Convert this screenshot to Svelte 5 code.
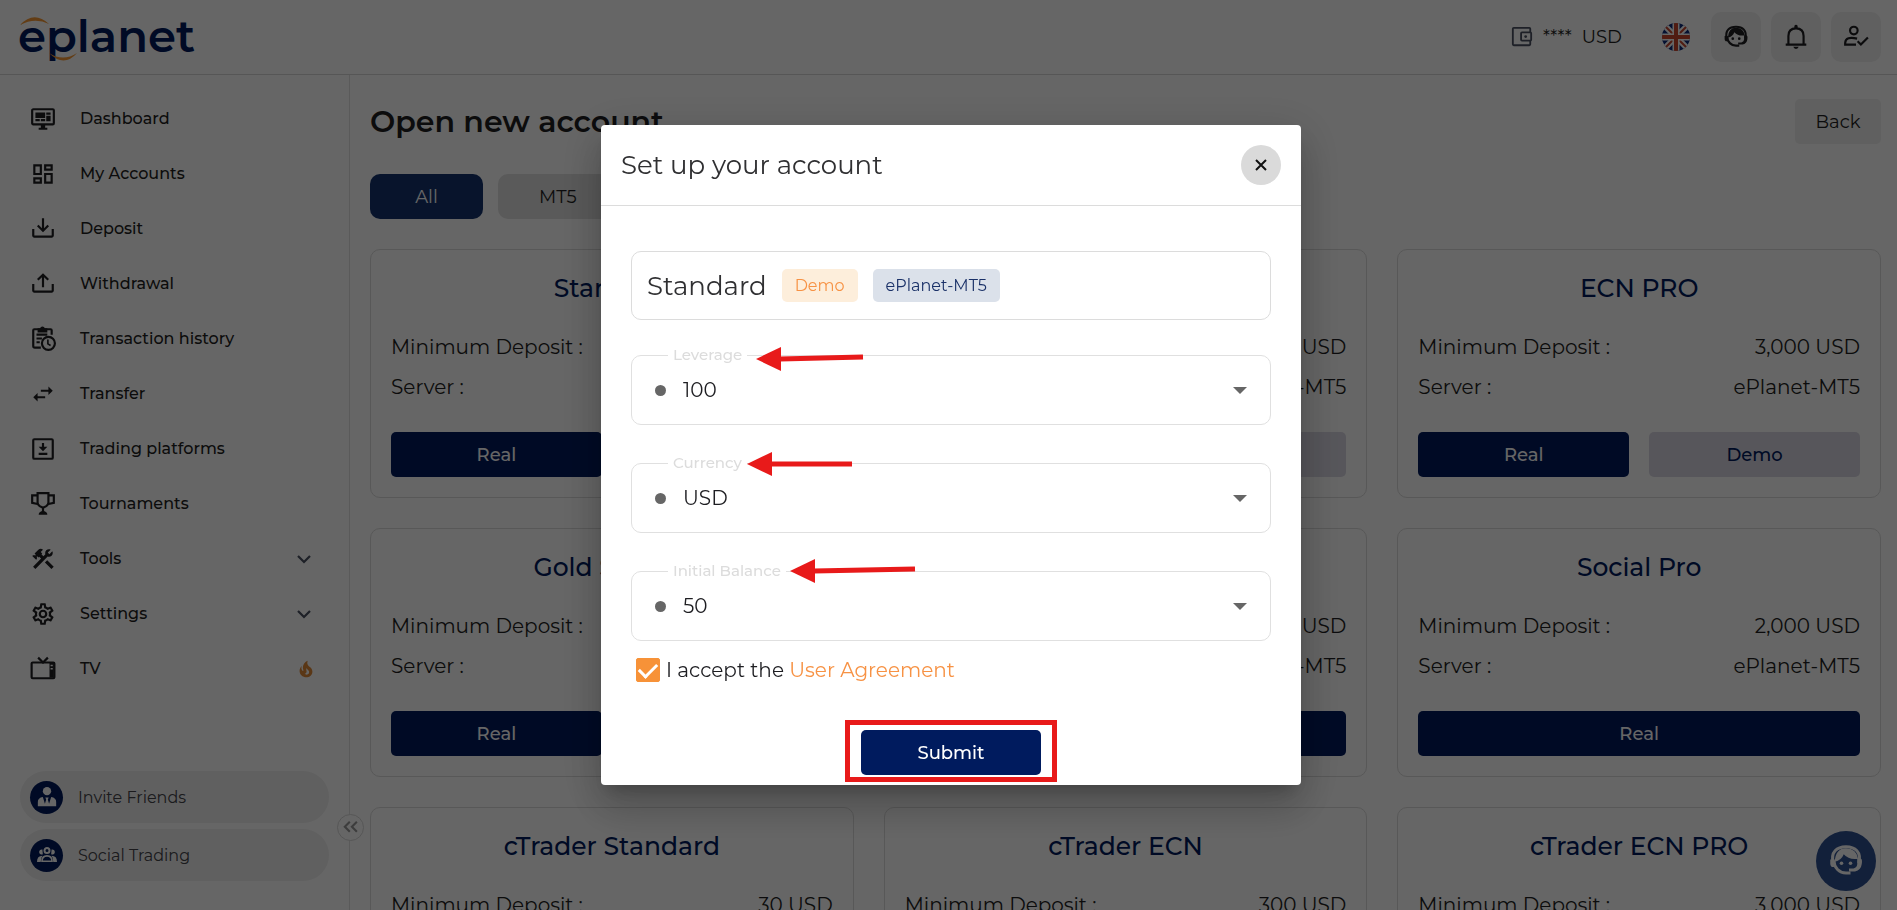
<script lang="ts">
  type NavItem = { label: string; icon: string; expandable?: boolean; hot?: boolean };
  type Account = { name: string; deposit: string; server: string; demo: boolean };

  const navItems: NavItem[] = [
    { label: 'Dashboard', icon: 'monitor' },
    { label: 'My Accounts', icon: 'accounts' },
    { label: 'Deposit', icon: 'deposit' },
    { label: 'Withdrawal', icon: 'withdrawal' },
    { label: 'Transaction history', icon: 'history' },
    { label: 'Transfer', icon: 'transfer' },
    { label: 'Trading platforms', icon: 'platforms' },
    { label: 'Tournaments', icon: 'trophy' },
    { label: 'Tools', icon: 'tools', expandable: true },
    { label: 'Settings', icon: 'settings', expandable: true },
    { label: 'TV', icon: 'tv', hot: true },
  ];

  const accounts: Account[] = [
    { name: 'Standard', deposit: '50 USD', server: 'ePlanet-MT5', demo: true },
    { name: 'ECN', deposit: '500 USD', server: 'ePlanet-MT5', demo: true },
    { name: 'ECN PRO', deposit: '3,000 USD', server: 'ePlanet-MT5', demo: true },
    { name: 'Gold Special', deposit: '50 USD', server: 'ePlanet-MT5', demo: true },
    { name: 'Social', deposit: '200 USD', server: 'ePlanet-MT5', demo: false },
    { name: 'Social Pro', deposit: '2,000 USD', server: 'ePlanet-MT5', demo: false },
    { name: 'cTrader Standard', deposit: '30 USD', server: 'ePlanet-cTrader', demo: true },
    { name: 'cTrader ECN', deposit: '300 USD', server: 'ePlanet-cTrader', demo: true },
    { name: 'cTrader ECN PRO', deposit: '3,000 USD', server: 'ePlanet-cTrader', demo: true },
  ];

  const fields = [
    { id: 'leverage', label: 'Leverage', options: ['100', '200', '500'], arrow: { left: 124, top: -16, length: 107, rise: 2 } },
    { id: 'currency', label: 'Currency', options: ['USD', 'EUR'], arrow: { left: 115, top: -19, length: 105, rise: 0 } },
    { id: 'balance', label: 'Initial Balance', options: ['50', '100', '1000'], arrow: { left: 158, top: -20, length: 125, rise: 2 } },
  ];

  // filled icons on a 24x24 grid
  const paths: Record<string, string> = {
    monitor: 'M21,16V4H3V16H21M21,2A2,2 0 0,1 23,4V16A2,2 0 0,1 21,18H14V20H16V22H8V20H10V18H3C1.89,18 1,17.1 1,16V4C1,2.89 1.89,2 3,2H21M5,6H14V11H5V6M15,6H19V8H15V6M19,9V14H15V9H19M5,12H9V14H5V12M10,12H14V14H10V12Z',
    accounts: 'M19,5V7H15V5H19M9,5V11H5V5H9M19,13V19H15V13H19M9,17V19H5V17H9M21,3H13V9H21V3M11,3H3V13H11V3M21,11H13V21H21V11M11,15H3V21H11V15Z',
    deposit: 'M2 12H4V18H20V12H22V18C22 19.11 21.11 20 20 20H4C2.9 20 2 19.11 2 18V12M12 15L17.55 9.54L16.13 8.13L13 11.25V2H11V11.25L7.88 8.13L6.46 9.55L12 15Z',
    withdrawal: 'M2 12H4V18H20V12H22V18C22 19.11 21.11 20 20 20H4C2.9 20 2 19.11 2 18V12M12 2L6.46 7.46L7.88 8.88L11 5.75V15H13V5.75L16.13 8.88L17.55 7.45L12 2Z',
    transfer: 'M21,9L17,5V8H10V10H17V13M7,11L3,15L7,19V16H14V14H7V11Z',
    tools: 'M13.78 15.17l2.12-2.12 6 6-2.12 2.12zM17.5 10c1.93 0 3.5-1.57 3.5-3.5 0-.58-.16-1.12-.41-1.6l-2.7 2.7-1.49-1.49 2.7-2.7c-.48-.25-1.02-.41-1.6-.41C15.57 3 14 4.57 14 6.5c0 .41.08.8.21 1.16l-1.85 1.85-1.78-1.78.71-.71-1.41-1.41L12 3.49c-1.17-1.17-3.07-1.17-4.24 0L4.22 7.03l1.41 1.41H2.81l-.71.71 3.54 3.54.71-.71V9.15l1.41 1.41.71-.71 1.78 1.78-7.41 7.41 2.12 2.12L16.34 9.79c.36.13.75.21 1.16.21z',
    settings: 'M12,8A4,4 0 0,1 16,12A4,4 0 0,1 12,16A4,4 0 0,1 8,12A4,4 0 0,1 12,8M12,10A2,2 0 0,0 10,12A2,2 0 0,0 12,14A2,2 0 0,0 14,12A2,2 0 0,0 12,10M10,22C9.75,22 9.54,21.82 9.5,21.58L9.13,18.93C8.5,18.68 7.96,18.34 7.44,17.94L4.95,18.95C4.73,19.03 4.46,18.95 4.34,18.73L2.34,15.27C2.21,15.05 2.27,14.78 2.46,14.63L4.57,12.97L4.5,12L4.57,11L2.46,9.37C2.27,9.22 2.21,8.95 2.34,8.73L4.34,5.27C4.46,5.05 4.73,4.96 4.95,5.05L7.44,6.05C7.96,5.66 8.5,5.32 9.13,5.07L9.5,2.42C9.54,2.18 9.75,2 10,2H14C14.25,2 14.46,2.18 14.5,2.42L14.87,5.07C15.5,5.32 16.04,5.66 16.56,6.05L19.05,5.05C19.27,4.96 19.54,5.05 19.66,5.27L21.66,8.73C21.79,8.95 21.73,9.22 21.54,9.37L19.43,11L19.5,12L19.43,13L21.54,14.63C21.73,14.78 21.79,15.05 21.66,15.27L19.66,18.73C19.54,18.95 19.27,19.04 19.05,18.95L16.56,17.95C16.04,18.34 15.5,18.68 14.87,18.93L14.5,21.58C14.46,21.82 14.25,22 14,22H10M11.25,4L10.88,6.61C9.68,6.86 8.62,7.5 7.85,8.39L5.44,7.35L4.69,8.65L6.8,10.2C6.4,11.37 6.4,12.64 6.8,13.8L4.68,15.36L5.43,16.66L7.86,15.62C8.63,16.5 9.68,17.14 10.87,17.38L11.24,20H12.76L13.13,17.39C14.32,17.14 15.37,16.5 16.14,15.62L18.57,16.66L19.32,15.36L17.2,13.81C17.6,12.64 17.6,11.37 17.2,10.2L19.31,8.65L18.56,7.35L16.15,8.39C15.38,7.5 14.32,6.86 13.12,6.62L12.75,4H11.25Z',
    fire: 'M17.66 11.2C17.43 10.9 17.15 10.64 16.89 10.38C16.22 9.78 15.46 9.35 14.82 8.72C13.33 7.26 13 4.85 13.95 3C13 3.23 12.17 3.75 11.46 4.32C8.87 6.4 7.85 10.07 9.07 13.22C9.11 13.32 9.15 13.42 9.15 13.55C9.15 13.77 9 13.97 8.8 14.05C8.57 14.15 8.33 14.09 8.14 13.93C8.08 13.88 8.04 13.83 8 13.76C6.87 12.33 6.69 10.28 7.45 8.64C5.78 10 4.87 12.3 5 14.47C5.06 14.97 5.12 15.47 5.29 15.97C5.43 16.57 5.7 17.17 6 17.7C7.08 19.43 8.95 20.67 10.96 20.92C13.1 21.19 15.39 20.8 17.03 19.32C18.86 17.66 19.5 15 18.56 12.72L18.43 12.46C18.22 12 17.66 11.2 17.66 11.2M14.5 17.5C14.22 17.74 13.76 18 13.4 18.1C12.28 18.5 11.16 17.94 10.5 17.28C11.69 17 12.4 16.12 12.61 15.23C12.78 14.43 12.46 13.77 12.33 13C12.21 12.26 12.23 11.63 12.5 10.94C12.69 11.32 12.89 11.7 13.13 12C13.9 13 15.11 13.44 15.37 14.8C15.41 14.94 15.43 15.08 15.43 15.23C15.46 16.05 15.1 16.95 14.5 17.5H14.5Z',
  };

  let modalOpen = $state(true);
  let accepted = $state(true);
  let activeTab = $state('All');
</script>

{#snippet icon(name: string)}
  <svg class="icon" viewBox="0 0 24 24" aria-hidden="true">
    {#if name === 'history'}
      <g fill="none" stroke="currentColor" stroke-width="2">
        <path d="M10 20H4.500Q3 20 3 18.500V4Q3 3 4 3H19Q20 3 20 4V8" />
        <path d="M6 8H16M6 11.500H11M6 15H9" />
        <circle cx="17" cy="16" r="6" />
        <path d="M16.500 12.500V16.500L19 18" stroke-width="1.500" />
      </g>
      <path d="M7 2H9.300a2.300 2.300 0 0 1 4.400 0H16V6H7Z" fill="currentColor" />
    {:else if name === 'platforms'}
      <rect x="3" y="3" width="18" height="18" rx="1" fill="none" stroke="currentColor" stroke-width="2" />
      <path d="M11 6.500H13V10H16L12 14L8 10H11ZM8 15.500H16V17.500H8Z" fill="currentColor" />
    {:else if name === 'trophy'}
      <path d="M7 2H17V10.500Q17 12.500 15 14L12 15.500L9 14Q7 12.500 7 10.500ZM7 4H2V11L7 12M17 4H22V11L17 12" fill="none" stroke="currentColor" stroke-width="2" />
      <path d="M11 15H13V18.500Q16 19.500 16 22H8Q8 19.500 11 18.500Z" fill="currentColor" />
    {:else if name === 'tv'}
      <rect x="1.500" y="6" width="21" height="14.500" rx="1" fill="none" stroke="currentColor" stroke-width="2" />
      <path d="M18 6H22V20H18Z" fill="currentColor" />
      <path d="M7.500 1.500L12 6L16.500 1.500" fill="none" stroke="currentColor" stroke-width="2" />
      <path d="M19 8H21V9.500H19ZM19 11H21V12.500H19Z" fill="#fff" />
    {:else if name === 'wallet'}
      <g fill="none" stroke="currentColor" stroke-width="2">
        <rect x="2" y="2" width="19" height="19" rx="1" />
        <rect x="11" y="7" width="11" height="9" rx="1" fill="#fff" />
      </g>
      <circle cx="16" cy="11.500" r="1.500" fill="currentColor" />
    {:else if name === 'support'}
      <path d="M4 12A8 8 0 0 0 12 20H15" fill="none" stroke="currentColor" stroke-width="2" />
      <path d="M3.500 13.500C1.500 6 6 2.500 12 2.500S22.500 6 20.500 13.500" fill="none" stroke="currentColor" stroke-width="2" />
      <path d="M4.500 12.500Q9 11.500 10.500 7.500Q14 11.500 20 10.500Q19 3.500 12 3.500T4.500 12.500ZM1.500 11H4.500V16H2.500Q1.500 15 1.500 14ZM19.500 10.500H22Q23 11 22.500 14Q22 18 18 19H14V17H17Q19.500 16 19.500 14Z" fill="currentColor" />
      <circle cx="9" cy="13.500" r="1.200" fill="currentColor" />
      <circle cx="15" cy="13.500" r="1.200" fill="currentColor" />
    {:else if name === 'bell'}
      <path d="M2.500 19H21.500M5 19V11Q5 4 12 4T19 11V19" fill="none" stroke="currentColor" stroke-width="2" />
      <path d="M10.500 1.500Q12 0 13.500 1.500V4H10.500ZM9.500 21H14.500Q14 23 12 23T9.500 21Z" fill="currentColor" />
    {:else if name === 'user-check'}
      <g fill="none" stroke="currentColor" stroke-width="2">
        <circle cx="10" cy="6" r="3.500" />
        <path d="M13 13.500Q2.500 11 2 17.500V19H12" />
        <path d="M13.500 16L16.500 19L23 12.500" />
      </g>
    {:else if name === 'chevron'}
      <path d="M4 8L12 16L20 8" fill="none" stroke="currentColor" stroke-width="3" />
    {:else if name === 'collapse'}
      <path d="M11 4L4 11L11 18M21 4L14 11L21 18" fill="none" stroke="currentColor" stroke-width="3" />
    {:else if name === 'friend'}
      <circle cx="12" cy="5" r="5" fill="currentColor" />
      <path d="M1 23V18Q1 13 7 12L9.500 20L11 15L10 12.500H14L13 15L14.500 20L17 12Q23 13 23 18V23Z" fill="currentColor" />
    {:else if name === 'group'}
      <circle cx="12" cy="6.500" r="3" fill="none" stroke="currentColor" stroke-width="2.400" />
      <path d="M6 19.500Q6 13 12 13T18 19.500Z" fill="none" stroke="currentColor" stroke-width="2" />
      <path d="M6.500 5.500A3 3 0 1 0 7 11ZM17.500 5.500A3 3 0 1 1 17 11ZM0 20.500Q0 13 6.500 13Q4.500 15.500 4.500 20.500ZM24 20.500Q24 13 17.500 13Q19.500 15.500 19.500 20.500Z" fill="currentColor" />
    {:else}
      <path d={paths[name]} fill="currentColor" fill-rule="evenodd" />
    {/if}
  </svg>
{/snippet}

<div class="app">
  <header class="topbar">
    <a class="logo" href="/" aria-label="eplanet">
      <svg viewBox="0 0 180 50" width="180" height="50" aria-hidden="true">
        <text x="-2" y="40" class="logo-text">eplanet</text>
        <path d="M0 13Q14-2 29 12Q15 5 0 13Z" fill="#f79a35" />
        <path d="M29 41Q44 56 57 41Q43 50 29 41Z" fill="#f79a35" />
      </svg>
    </a>
    <div class="topbar-actions">
      <button class="wallet">{@render icon('wallet')}<span>****</span><span>USD</span></button>
      <button class="flag" aria-label="Language">
        <svg viewBox="0 0 28 28" width="28" height="28" aria-hidden="true">
          <clipPath id="round"><circle cx="14" cy="14" r="14" /></clipPath>
          <g clip-path="url(#round)">
            <rect width="28" height="28" fill="#0d2b7a" />
            <path d="M0 0L28 28M28 0L0 28" stroke="#fff" stroke-width="6" />
            <path d="M0 0L28 28M28 0L0 28" stroke="#c8472f" stroke-width="2" />
            <path d="M14 0V28M0 14H28" stroke="#fff" stroke-width="7" />
            <path d="M14 0V28M0 14H28" stroke="#c8472f" stroke-width="4" />
          </g>
        </svg>
      </button>
      <div class="tool-buttons">
        <button class="tool" aria-label="Support">{@render icon('support')}</button>
        <button class="tool" aria-label="Notifications">{@render icon('bell')}</button>
        <button class="tool" aria-label="Profile">{@render icon('user-check')}</button>
      </div>
    </div>
  </header>

  <div class="body">
    <aside class="sidebar">
      <nav>
        {#each navItems as item}
          <a class="nav-item" href="#{item.icon}">
            {@render icon(item.icon)}
            <span class="nav-label">{item.label}</span>
            {#if item.expandable}
              <span class="nav-chevron">{@render icon('chevron')}</span>
            {/if}
            {#if item.hot}
              <span class="nav-fire">{@render icon('fire')}</span>
            {/if}
          </a>
        {/each}
      </nav>
      <div class="promos">
        <a class="promo" href="#invite"><span class="promo-icon">{@render icon('friend')}</span>Invite Friends</a>
        <a class="promo" href="#social"><span class="promo-icon">{@render icon('group')}</span>Social Trading</a>
      </div>
      <button class="collapse" aria-label="Collapse menu">{@render icon('collapse')}</button>
    </aside>

    <main>
      <div class="page-head">
        <h1>Open new account</h1>
        <button class="back">Back</button>
      </div>
      <div class="tabs">
        {#each ['All', 'MT5', 'cTrader'] as tab}
          <button class="tab" class:active={activeTab === tab} onclick={() => (activeTab = tab)}>{tab}</button>
        {/each}
      </div>
      <div class="cards">
        {#each accounts as account}
          <section class="card">
            <h2>{account.name}</h2>
            <div class="row"><span>Minimum Deposit :</span><span>{account.deposit}</span></div>
            <div class="row"><span>Server :</span><span>{account.server}</span></div>
            <div class="card-buttons">
              <button class="real">Real</button>
              {#if account.demo}
                <button class="demo" onclick={() => (modalOpen = true)}>Demo</button>
              {/if}
            </div>
          </section>
        {/each}
      </div>
    </main>
  </div>

  <button class="chat" aria-label="Chat">{@render icon('support')}</button>
</div>

{#if modalOpen}
  <div class="overlay">
    <div class="modal" role="dialog" aria-modal="true" aria-labelledby="modal-title">
      <div class="modal-head">
        <h2 id="modal-title">Set up your account</h2>
        <button class="close" aria-label="Close" onclick={() => (modalOpen = false)}>
          <svg viewBox="0 0 12 12" width="12" height="12" aria-hidden="true">
            <path d="M1 1L11 11M11 1L1 11" stroke="#111" stroke-width="2" />
          </svg>
        </button>
      </div>
      <form class="modal-body" onsubmit={(e) => e.preventDefault()}>
        <div class="account">
          <span class="account-name">Standard</span>
          <span class="chip chip-demo">Demo</span>
          <span class="chip chip-server">ePlanet-MT5</span>
        </div>

        <div class="fields">
          {#each fields as field}
            <fieldset class="field">
              <legend><label for={field.id}>{field.label}</label></legend>
              <div class="field-inner">
                <span class="dot"></span>
                <select id={field.id}>
                  {#each field.options as option}
                    <option>{option}</option>
                  {/each}
                </select>
                <svg class="caret" viewBox="0 0 14 7" width="14" height="7" aria-hidden="true"><path d="M0 0H14L7 7Z" fill="#666" /></svg>
              </div>
              <svg class="arrow" style="left: {field.arrow.left}px; top: {field.arrow.top}px" width={field.arrow.length} height="24" aria-hidden="true">
                <path d="M0 12L25 0V24Z" fill="#e81a1a" />
                <path d="M24 12L{field.arrow.length} {12 - field.arrow.rise}" stroke="#e81a1a" stroke-width="5" />
              </svg>
            </fieldset>
          {/each}
        </div>

        <div class="agree">
          <input id="agree" type="checkbox" bind:checked={accepted} />
          <label for="agree">I accept the <a href="#agreement">User Agreement</a></label>
        </div>

        <div class="highlight">
          <button class="submit" type="submit">Submit</button>
        </div>
      </form>
    </div>
  </div>
{/if}

<style>
  :global(body) {
    margin: 0;
    background: #fff;
  }

  .app,
  .overlay {
    font-family: Montserrat, Inter, sans-serif;
    font-size: 18px;
    color: #1e1e22;
  }

  .app *,
  .overlay * {
    box-sizing: border-box;
  }

  button,
  select {
    font: inherit;
    color: inherit;
    border: none;
    background: none;
    padding: 0;
    cursor: pointer;
  }

  a {
    color: inherit;
    text-decoration: none;
  }

  h1,
  h2 {
    margin: 0;
    font-weight: 500;
  }

  .app {
    position: relative;
    display: flex;
    flex-direction: column;
    height: 100vh;
    overflow: hidden;
  }

  .icon {
    display: block;
    width: 26px;
    height: 26px;
    flex-shrink: 0;
  }

  .topbar {
    display: flex;
    align-items: center;
    justify-content: space-between;
    flex-shrink: 0;
    height: 75px;
    padding: 0 16px 0 20px;
    border-bottom: 1px solid #d8d8d8;
  }

  .logo svg {
    display: block;
    overflow: visible;
  }

  .logo-text {
    font-size: 45px;
    font-weight: 600;
    fill: #001b5e;
  }

  .topbar-actions {
    display: flex;
    align-items: center;
  }

  .wallet {
    display: flex;
    align-items: center;
    gap: 10px;
    margin-right: 40px;
  }

  .wallet .icon {
    width: 22px;
    height: 22px;
    color: #4b5263;
  }

  .flag {
    margin-right: 21px;
  }

  .flag svg {
    display: block;
  }

  .tool-buttons {
    display: flex;
    gap: 10px;
  }

  .tool {
    display: grid;
    place-items: center;
    width: 50px;
    height: 50px;
    border-radius: 10px;
    background: #f0f0f0;
  }

  .body {
    display: flex;
    flex: 1;
    min-height: 0;
  }

  .sidebar {
    position: relative;
    display: flex;
    flex-direction: column;
    justify-content: space-between;
    flex-shrink: 0;
    width: 350px;
    padding: 16px 20px 29px;
    border-right: 1px solid #e0e0e0;
  }

  .nav-item {
    display: flex;
    align-items: center;
    height: 55px;
    padding: 0 14px 0 10px;
  }

  .nav-label {
    flex: 1;
    padding-left: 24px;
    font-size: 16px;
    font-weight: 500;
  }

  .nav-chevron .icon {
    width: 18px;
    height: 18px;
    margin-right: 2px;
    color: #4b5263;
  }

  .nav-fire .icon {
    width: 22px;
    height: 22px;
    margin-right: -2px;
    color: #e08a38;
  }

  .promos {
    display: flex;
    flex-direction: column;
    gap: 6px;
  }

  .promo {
    display: flex;
    align-items: center;
    gap: 15px;
    height: 52px;
    padding: 0 10px;
    border-radius: 26px;
    background: #f0f0f0;
    font-size: 16px;
    color: #44444a;
  }

  .promo-icon {
    display: grid;
    place-items: center;
    width: 33px;
    height: 33px;
    border-radius: 50%;
    background: #001b5e;
    color: #fff;
  }

  .promo-icon .icon {
    width: 20px;
    height: 20px;
  }

  .collapse {
    position: absolute;
    right: -15px;
    bottom: 69px;
    display: grid;
    place-items: center;
    width: 27px;
    height: 27px;
    border: 1px solid #d8d8d8;
    border-radius: 50%;
    background: #fff;
    color: #999;
  }

  .collapse .icon {
    width: 17px;
    height: 17px;
  }

  main {
    flex: 1;
    min-width: 0;
    padding: 24px 16px 0 20px;
    overflow: hidden;
  }

  .page-head {
    display: flex;
    align-items: center;
    justify-content: space-between;
    margin-bottom: 30px;
  }

  h1 {
    font-size: 30px;
    line-height: 45px;
    font-weight: 600;
  }

  .back {
    width: 86px;
    height: 45px;
    border-radius: 5px;
    background: #f0f0f0;
  }

  .tabs {
    display: flex;
    gap: 15px;
    margin-bottom: 30px;
  }

  .tab {
    min-width: 113px;
    height: 45px;
    padding: 0 41px;
    border-radius: 10px;
    background: #e0e0e0;
  }

  .tab.active {
    background: #14336f;
    color: #fff;
  }

  .cards {
    display: grid;
    grid-template-columns: repeat(3, 1fr);
    gap: 30px;
  }

  .card {
    padding: 20px;
    border: 1px solid #dcdcdc;
    border-radius: 10px;
  }

  .card h2 {
    margin-bottom: 20px;
    font-size: 25px;
    line-height: 37px;
    text-align: center;
    color: #001b5e;
  }

  .row {
    display: flex;
    justify-content: space-between;
    font-size: 20px;
    line-height: 40px;
  }

  .card-buttons {
    display: flex;
    gap: 20px;
    margin-top: 25px;
  }

  .card-buttons button {
    flex: 1;
    height: 45px;
    border-radius: 5px;
    font-weight: 500;
  }

  .card-buttons .real {
    background: #001b5e;
    color: #fff;
  }

  .card-buttons .demo {
    background: #dad8e4;
    color: #001b5e;
  }

  .chat {
    position: absolute;
    right: 21px;
    bottom: 19px;
    display: grid;
    place-items: center;
    width: 60px;
    height: 60px;
    border-radius: 50%;
    background: #2f5192;
    color: #fff;
  }

  .chat .icon {
    width: 36px;
    height: 36px;
  }

  .overlay {
    position: fixed;
    inset: 0;
    display: flex;
    align-items: center;
    justify-content: center;
    padding-left: 5px;
    background: rgba(0, 0, 0, 0.6);
  }

  .modal {
    width: 700px;
    border-radius: 4px;
    background: #fff;
    box-shadow:
      0 11px 15px -7px rgba(0, 0, 0, 0.2),
      0 24px 38px 3px rgba(0, 0, 0, 0.14),
      0 9px 46px 8px rgba(0, 0, 0, 0.12);
  }

  .modal-head {
    display: flex;
    align-items: center;
    justify-content: space-between;
    height: 81px;
    padding: 0 20px;
    border-bottom: 1px solid #dcdcdc;
  }

  .modal-head h2 {
    font-size: 26px;
    font-weight: 400;
    color: #303032;
  }

  .close {
    display: grid;
    place-items: center;
    width: 40px;
    height: 40px;
    border-radius: 50%;
    background: #dadada;
  }

  .modal-body {
    display: flex;
    flex-direction: column;
    padding: 45px 30px 3px;
  }

  .account {
    display: flex;
    align-items: center;
    gap: 15px;
    height: 69px;
    padding: 0 15px;
    margin-bottom: 27px;
    border: 1px solid #dcdcdc;
    border-radius: 10px;
  }

  .account-name {
    font-size: 26px;
    color: #303032;
  }

  .chip {
    padding: 0 13px;
    border-radius: 5px;
    font-size: 16px;
    line-height: 33px;
  }

  .chip-demo {
    background: #fdeedb;
    color: #f79244;
  }

  .chip-server {
    background: #dbe1ea;
    color: #1a3168;
  }

  .fields {
    display: flex;
    flex-direction: column;
    gap: 30px;
  }

  .field {
    position: relative;
    min-width: 0;
    margin: 0;
    padding: 0;
    border: 1px solid #e0e0e0;
    border-radius: 10px;
  }

  legend {
    margin-left: 36px;
    padding: 0 5px;
    font-size: 15px;
    line-height: 16px;
    font-weight: 500;
    color: #dcdcdc;
  }

  legend label {
    display: block;
  }

  .field-inner {
    display: flex;
    align-items: center;
    height: 61px;
    padding: 0 23px 7px;
  }

  .dot {
    width: 11px;
    height: 11px;
    border-radius: 50%;
    background: #666;
  }

  select {
    flex: 1;
    height: 40px;
    padding-left: 17px;
    appearance: none;
    font-size: 20px;
    outline: none;
  }

  .arrow {
    position: absolute;
    overflow: visible;
  }

  .agree {
    display: flex;
    align-items: center;
    gap: 6px;
    height: 24px;
    margin: 17px 0 38px 5px;
    font-size: 20px;
  }

  .agree a {
    color: #f79244;
  }

  .agree input {
    display: grid;
    place-items: center;
    width: 24px;
    height: 24px;
    margin: 0;
    border: 1px solid #f79238;
    border-radius: 2px;
    appearance: none;
  }

  .agree input:checked {
    background: #f79238;
  }

  .agree input:checked::after {
    content: '';
    width: 15px;
    height: 8px;
    margin-bottom: 4px;
    border: solid #fff;
    border-width: 0 0 3px 3px;
    transform: rotate(-45deg);
  }

  .highlight {
    align-self: center;
    padding: 5px 11px 2px;
    border: 5px solid #e81a1a;
  }

  .submit {
    display: block;
    width: 180px;
    height: 45px;
    border-radius: 5px;
    background: #001b5e;
    font-weight: 500;
    color: #fff;
  }
</style>
